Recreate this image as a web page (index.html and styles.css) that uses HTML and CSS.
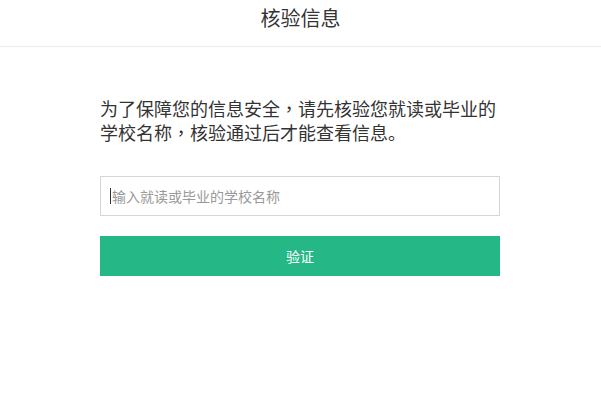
FILE: index.html
```html
<!DOCTYPE html>
<html lang="zh-CN">
<head>
<meta charset="utf-8">
<title>核验信息</title>
<link rel="stylesheet" href="styles.css">
</head>
<body>
<header class="header">
  <h1 class="title">核验信息</h1>
</header>
<main class="main">
  <p class="tip">为了保障您的信息安全<span class="punc" lang="zh-TW">，</span>请先核验您就读或毕业的学校名称<span class="punc" lang="zh-TW">，</span>核验通过后才能查看信息。</p>
  <div class="field">
    <input class="input" type="text" placeholder="输入就读或毕业的学校名称">
  </div>
  <button class="btn" type="button">验证</button>
</main>
</body>
</html>
```

FILE: styles.css
```css
* { box-sizing: border-box; }
html, body {
  margin: 0;
  padding: 0;
  background: #fff;
  font-family: "Noto Sans CJK SC", "Noto Sans", "Liberation Sans", sans-serif;
  color: #333;
}
.header {
  height: 47px;
  border-bottom: 1px solid #ececec;
  display: flex;
  align-items: center;
  justify-content: center;
}
.title {
  margin: 0;
  font-size: 20px;
  font-weight: normal;
  line-height: 26px;
  color: #333;
  position: relative;
  top: -5px;
}
.main {
  margin: 0 100px;
  max-width: 400px;
  padding-top: 49px;
  display: flex;
  flex-direction: column;
}
.tip {
  margin: 0;
  font-size: 18px;
  line-height: 24px;
  color: #333;
}
.punc {
  font-family: "Noto Sans CJK TC", "Noto Sans CJK SC", sans-serif;
}
.field {
  margin-top: 32px;
  position: relative;
}
.field::after {
  content: "";
  position: absolute;
  left: 10px;
  top: 12px;
  width: 1px;
  height: 16px;
  background: #333;
}
.input {
  display: block;
  width: 100%;
  height: 40px;
  border: 1px solid #d6d6d6;
  border-radius: 0;
  padding: 0 11px;
  font-family: inherit;
  font-size: 14px;
  color: #333;
  outline: none;
}
.input::placeholder {
  color: #999;
}
.btn {
  margin-top: 20px;
  height: 40px;
  width: 100%;
  border: none;
  border-radius: 0;
  background: #25b886;
  color: #fff;
  font-family: inherit;
  font-size: 14px;
  cursor: pointer;
}
```
